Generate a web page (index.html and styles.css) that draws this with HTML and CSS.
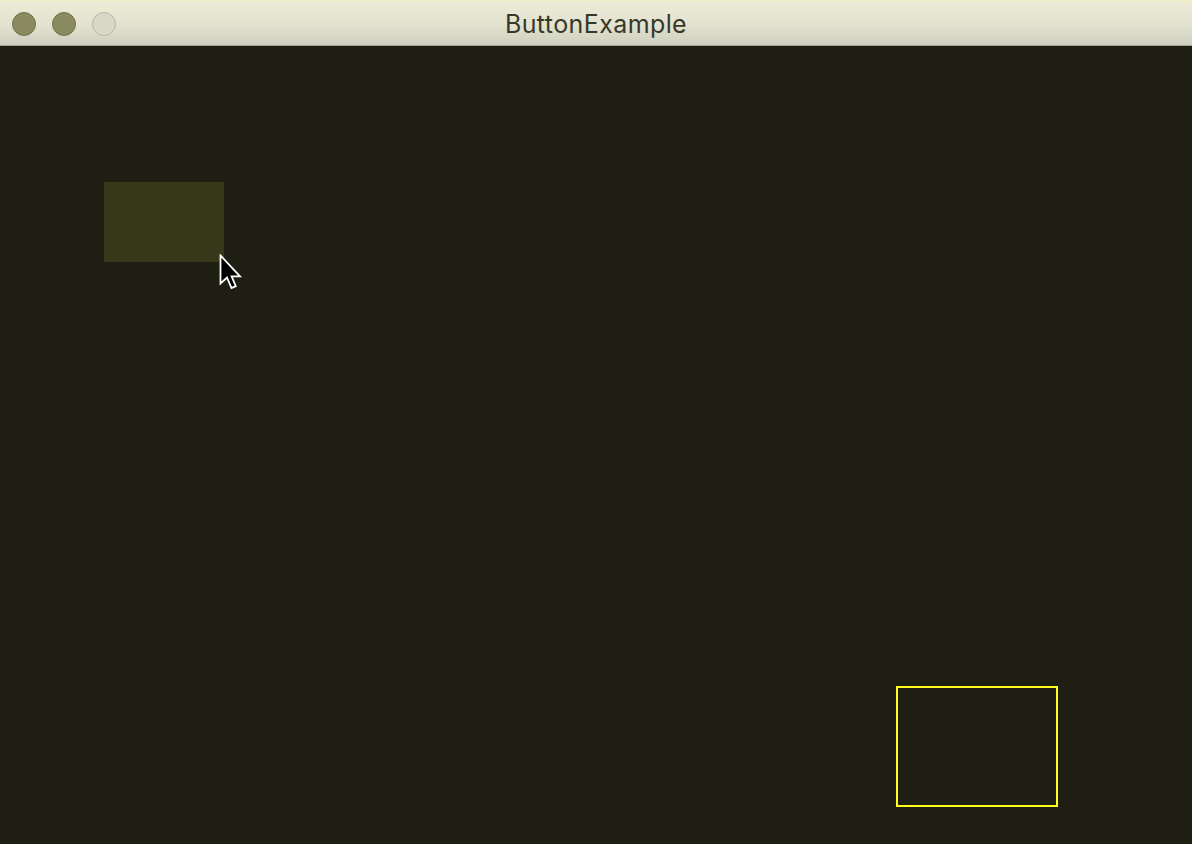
FILE: index.html
```html
<!DOCTYPE html>
<html>
<head>
<meta charset="utf-8">
<link rel="stylesheet" href="styles.css">
</head>
<body>
<div class="window">
  <div class="titlebar">
    <div class="lights">
      <span class="light dark"></span>
      <span class="light dark"></span>
      <span class="light pale"></span>
    </div>
    <div class="title">ButtonExample</div>
  </div>
  <div class="canvas">
    <div class="btn-hover"></div>
    <svg class="cursor" width="26" height="38" viewBox="0 0 26 38">
      <path d="M1.5 1.5 L1.5 29.5 L8 23.5 L12.5 34 L16.8 32.2 L12.6 22.3 L21 22.3 Z" fill="#000" stroke="#fff" stroke-width="1.8" stroke-linejoin="miter"/>
    </svg>
    <div class="btn-outline"></div>
  </div>
</div>
</body>
</html>
```
FILE: styles.css
```css
html, body {
  margin: 0;
  padding: 0;
  background: #1e1e12;
}
.window {
  width: 1192px;
  height: 844px;
  display: flex;
  flex-direction: column;
  overflow: hidden;
}
.titlebar {
  height: 46px;
  flex: none;
  position: relative;
  background: linear-gradient(#ececd6 0%, #e2e2d0 55%, #cfcfc0 100%);
  border-top: 1px solid #f2f2c0;
  border-bottom: 1px solid #a4a494;
  box-sizing: border-box;
  display: flex;
  align-items: center;
  justify-content: center;
}
.lights {
  position: absolute;
  left: 12px;
  top: 11px;
  display: flex;
  gap: 16px;
}
.light {
  width: 24px;
  height: 24px;
  border-radius: 50%;
  box-sizing: border-box;
}
.light.dark {
  background: #8a8a60;
  border: 1px solid #74744c;
}
.light.pale {
  background: #d8d8c8;
  border: 1px solid #b8b8a8;
}
.title {
  font-family: "Inter", "Roboto", "Liberation Sans", sans-serif;
  font-size: 25px;
  letter-spacing: 0.4px;
  color: #38382a;
  margin-left: 0px;
  margin-top: 1px;
}
.canvas {
  flex: 1;
  position: relative;
  background: #1e1e12;
}
.btn-hover {
  position: absolute;
  left: 104px;
  top: 136px;
  width: 120px;
  height: 80px;
  background: #37371a;
}
.cursor {
  position: absolute;
  left: 219px;
  top: 208px;
}
.btn-outline {
  position: absolute;
  left: 896px;
  top: 640px;
  width: 162px;
  height: 121px;
  box-sizing: border-box;
  border: 2px solid #ffff1e;
}
```
